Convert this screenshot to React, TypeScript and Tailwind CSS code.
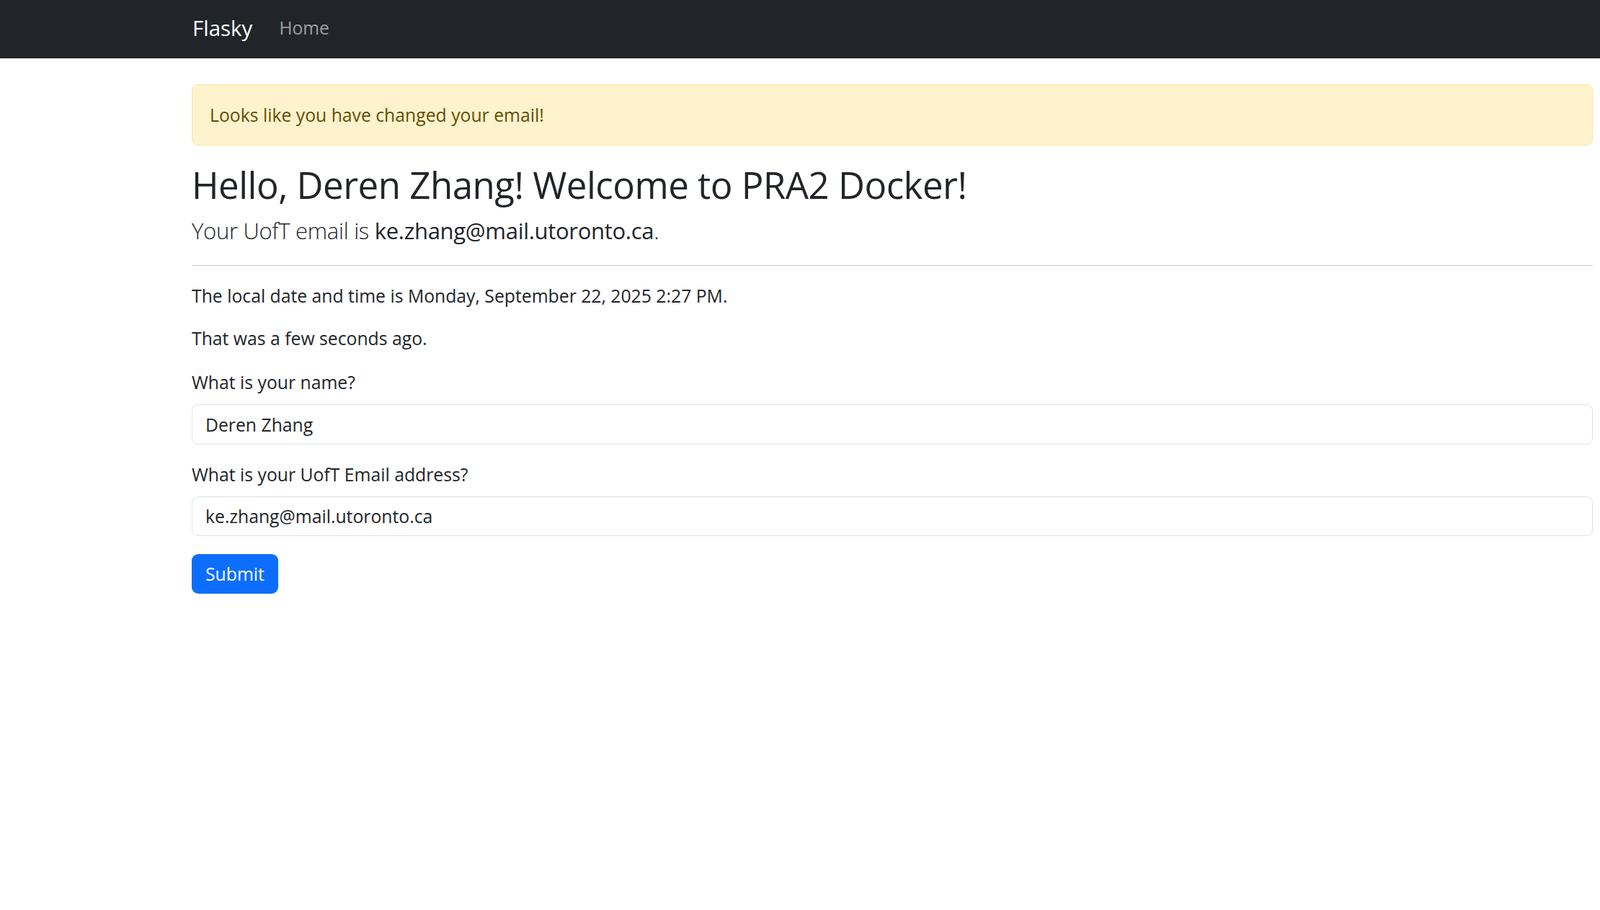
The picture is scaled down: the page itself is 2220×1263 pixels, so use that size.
import React from "react"

const App: React.FC = () => {
  return (
    <div className="min-h-[1263px] bg-white text-[#212529] font-['Open_Sans',sans-serif]">
      <nav className="h-[81px] bg-[#212529] flex items-center pl-[267px] pb-[3px]">
        <span className="text-[29.5px] text-white">Flasky</span>
        <a className="ml-[37px] text-[24.6px] text-white/55">Home</a>
      </nav>

      <main className="ml-[266px] mr-[10px]">
        <div className="mt-[36px] h-[85px] flex items-center px-[24px] bg-[#fff3cd] border border-[#ffe69c] rounded-[9px] text-[24.75px] text-[#664d03]">
          Looks like you have changed your email!
        </div>

        <h1 className="mt-[22px] text-[51px] leading-[64px] tracking-[-0.5px]">
          Hello, Deren Zhang! Welcome to PRA2 Docker!
        </h1>
        <p className="mt-[10px] text-[31px] leading-[44px] tracking-[-0.3px]">
          <span className="font-light">Your UofT email is </span>
          <span>ke.zhang@mail.utoronto.ca</span>
          <span className="font-light">.</span>
        </p>
        <hr className="mt-[26px] border-t-[1.5px] border-[#c8c9ca]" />

        <div className="text-[24.75px] leading-[36px]">
          <p className="mt-[24px]">The local date and time is Monday, September 22, 2025 2:27 PM.</p>
          <p className="mt-[23px]">That was a few seconds ago.</p>

          <form className="mt-[25px]">
            <label className="block">What is your name?</label>
            <input
              className="mt-[12px] block w-full h-[56px] px-[18px] border border-[#dee2e6] rounded-[9px] bg-white text-[#212529] outline-none"
              defaultValue="Deren Zhang"
            />
            <label className="block mt-[24px]">What is your UofT Email address?</label>
            <input
              className="mt-[12px] block w-full h-[55px] px-[18px] border border-[#dee2e6] rounded-[9px] bg-white text-[#212529] outline-none"
              defaultValue="ke.zhang@mail.utoronto.ca"
            />
            <button
              type="button"
              className="mt-[25px] w-[120px] h-[55px] rounded-[9px] bg-[#0d6efd] text-white flex items-center justify-center"
            >
              Submit
            </button>
          </form>
        </div>
      </main>
    </div>
  )
}

export default App
